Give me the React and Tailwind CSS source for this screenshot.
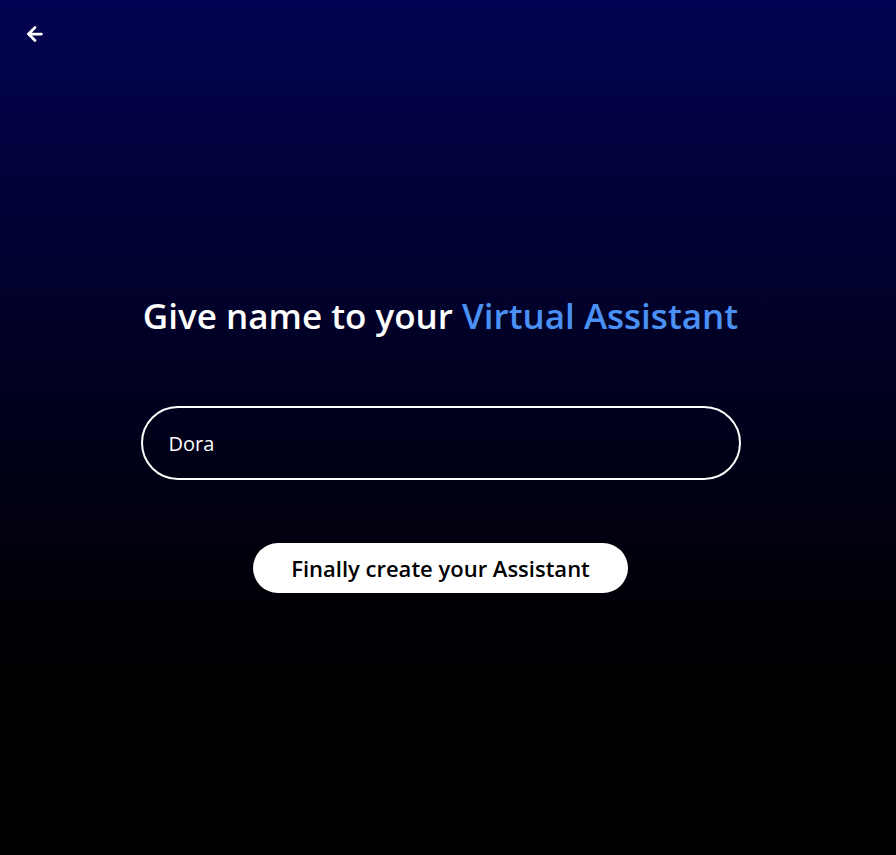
import { useState } from 'react'
import { ArrowLeft } from 'lucide-react'

function App() {
  const [name, setName] = useState('Dora')

  return (
    <div
      className="w-full h-[855px] bg-gradient-to-t from-black to-[#030353] flex flex-col items-center justify-center pr-[15px] relative"
      style={{ fontFamily: '"Open Sans", "Noto Sans", sans-serif' }}
    >
      <ArrowLeft className="absolute top-[23px] left-[24px] w-[22px] h-[22px] text-white" strokeWidth={3} />

      <h1 className="text-white text-[35px] leading-[48px] font-semibold mb-[66px] mt-[30px]">
        Give name to your <span className="text-[#4a90f5]">Virtual Assistant</span>
      </h1>

      <input
        type="text"
        value={name}
        onChange={(e) => setName(e.target.value)}
        className="w-[600px] h-[74px] outline-none border-2 border-white bg-transparent text-white px-[26px] rounded-full text-[20px]"
      />

      <button className="w-[375px] h-[50px] mt-[63px] text-black font-semibold bg-white rounded-full text-[22px]">
        Finally create your Assistant
      </button>
    </div>
  )
}

export default App
